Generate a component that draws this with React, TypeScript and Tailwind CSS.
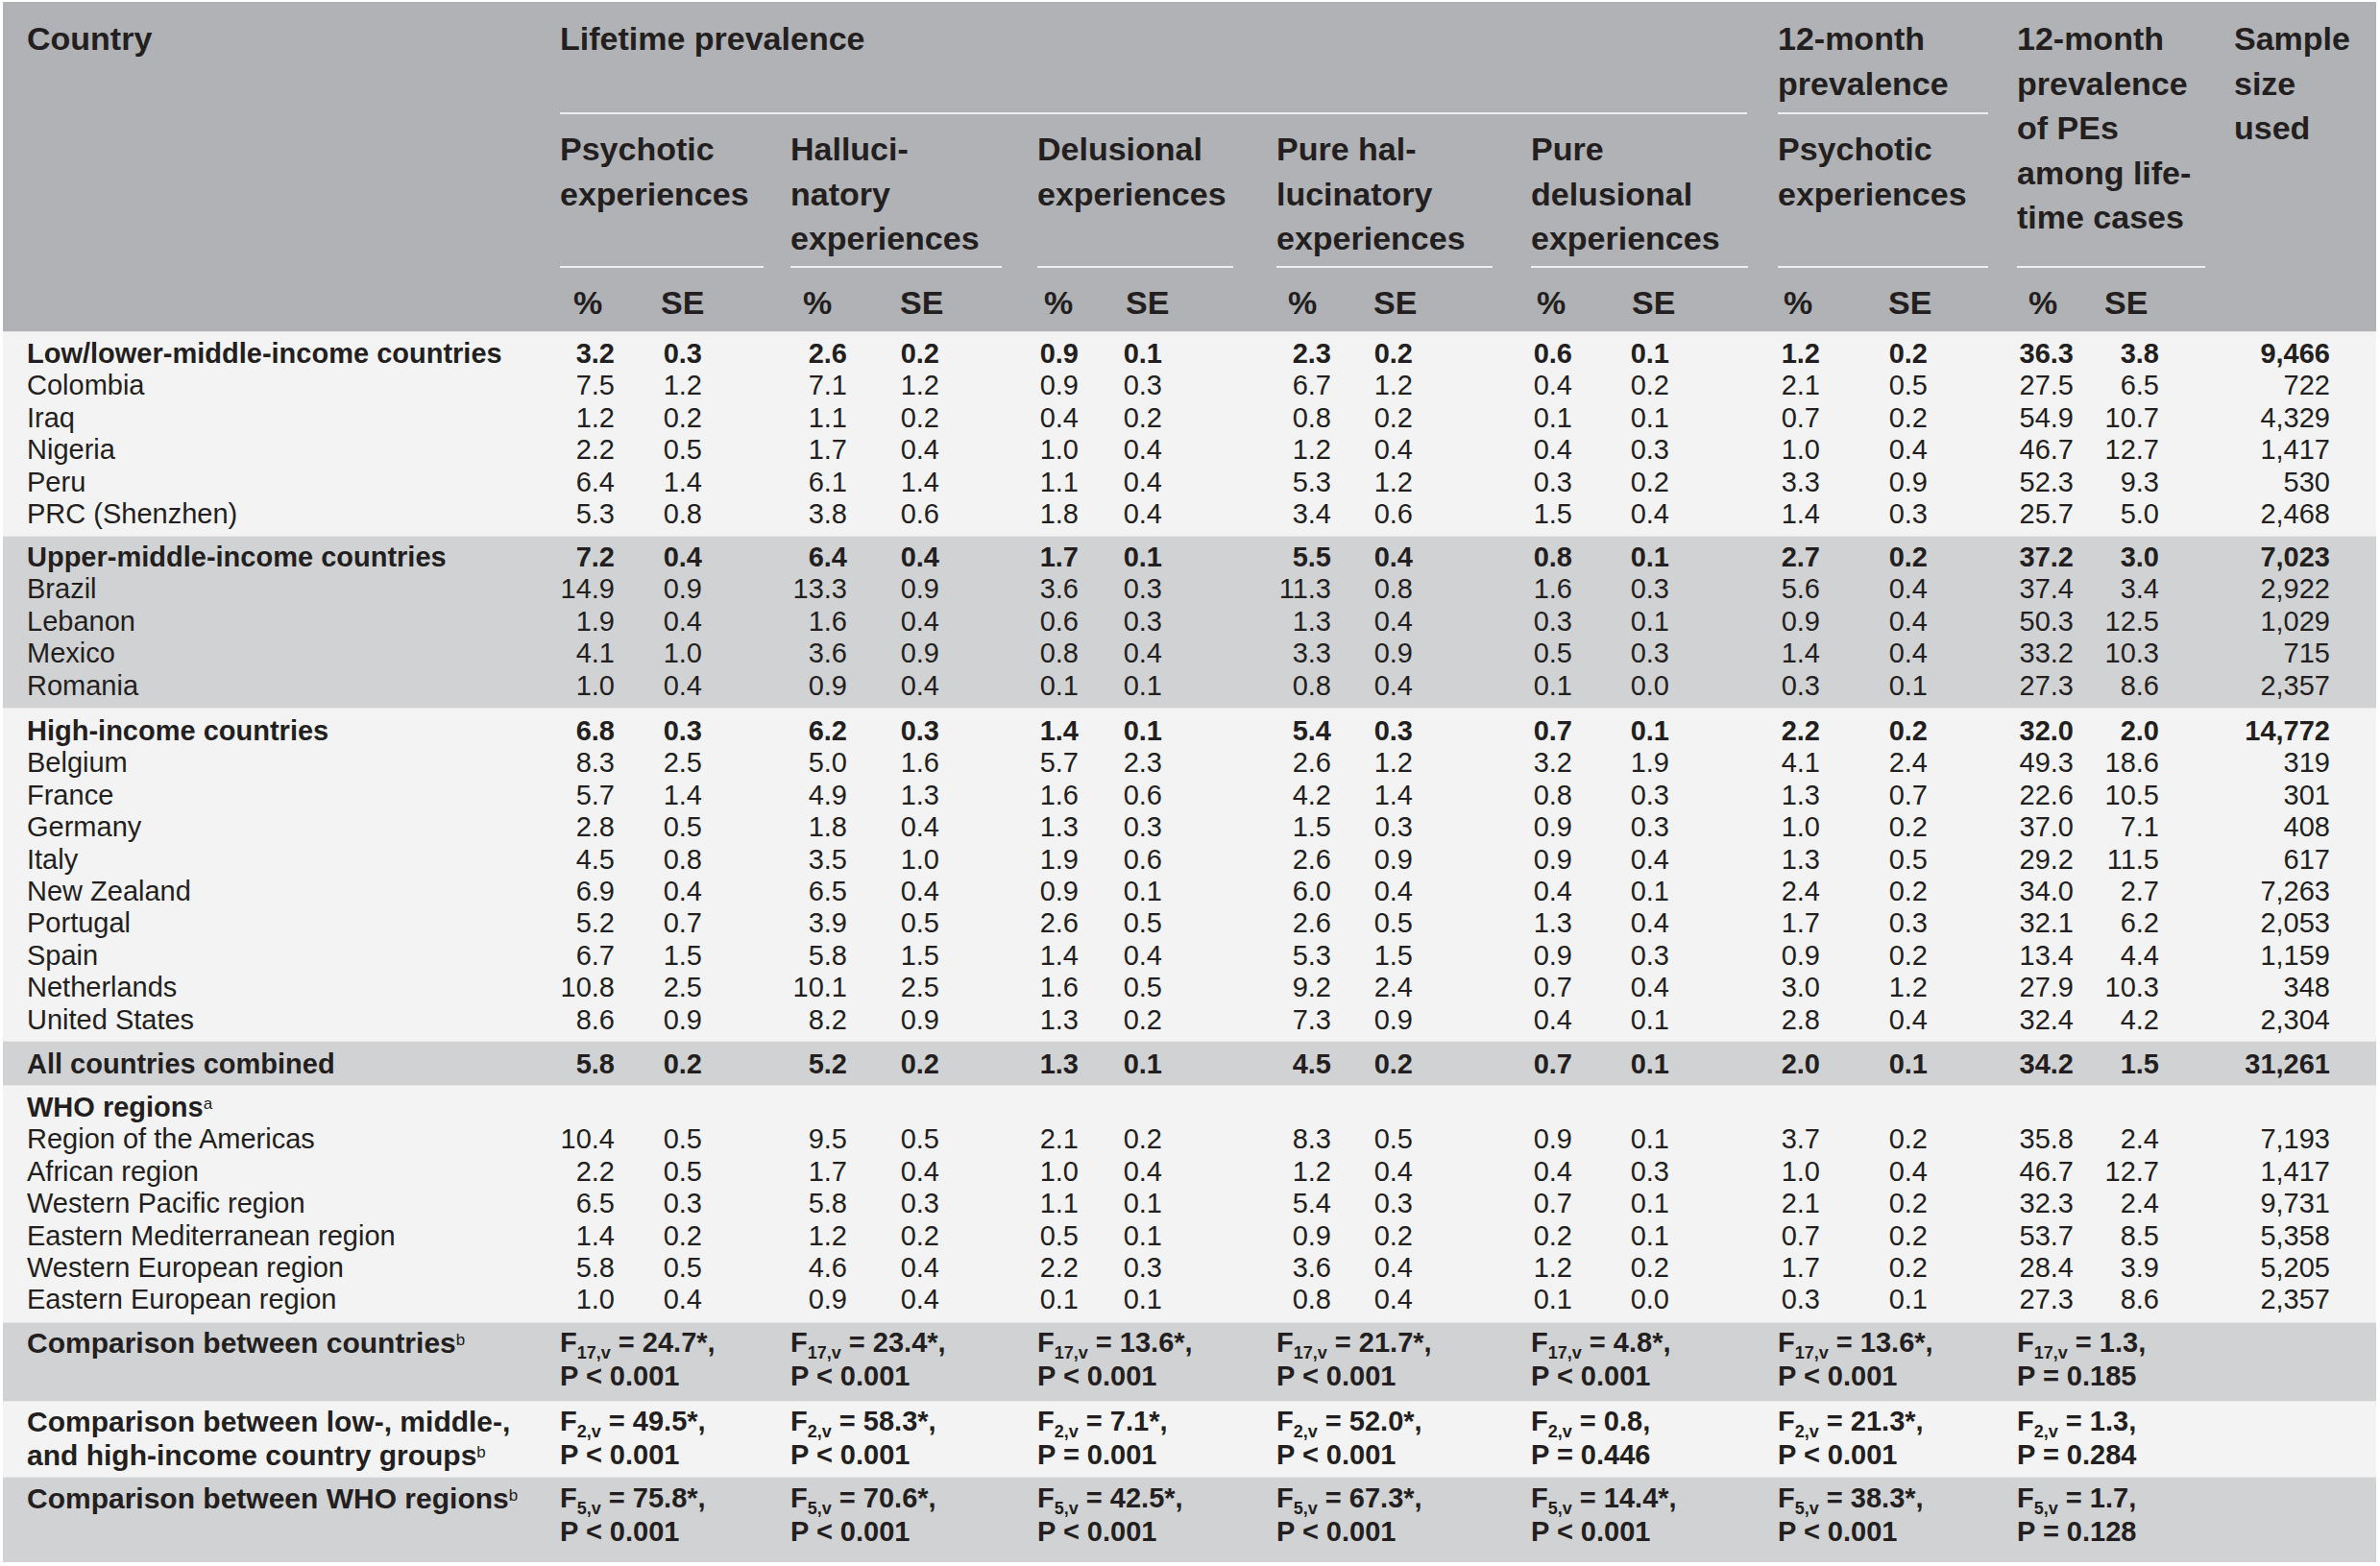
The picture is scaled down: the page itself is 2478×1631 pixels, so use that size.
type Pair = [string, string];

type Row = {
    label: string;
    vals?: Pair[];
    n?: string;
    bold?: boolean;
    sup?: string;
};

type Band = {
    bg: string;
    box: string;
    rows: Row[];
};

// widths of the %, SE and gap cells of each column group (x 583 → 2326)
const groups = [
    { wrap: 'w-[240px]', pct: 'w-[57px]', se: 'w-[91px]', gap: 'w-[92px]', line: 'w-[212px]', hpl: 'pl-[14px] w-[105px]' },
    { wrap: 'w-[257px]', pct: 'w-[59px]', se: 'w-[96px]', gap: 'w-[102px]', line: 'w-[220px]', hpl: 'pl-[13px] w-[114px]' },
    { wrap: 'w-[249px]', pct: 'w-[43px]', se: 'w-[87px]', gap: 'w-[119px]', line: 'w-[204px]', hpl: 'pl-[7px] w-[92px]' },
    { wrap: 'w-[265px]', pct: 'w-[57px]', se: 'w-[85px]', gap: 'w-[123px]', line: 'w-[225px]', hpl: 'pl-[12px] w-[101px]' },
    { wrap: 'w-[257px]', pct: 'w-[43px]', se: 'w-[101px]', gap: 'w-[113px]', line: 'w-[226px]', hpl: 'pl-[6px] w-[105px]' },
    { wrap: 'w-[249px]', pct: 'w-[44px]', se: 'w-[112px]', gap: 'w-[93px]', line: 'w-[219px]', hpl: 'pl-[6px] w-[115px]' },
    { wrap: 'w-[226px]', pct: 'w-[59px]', se: 'w-[89px]', gap: 'w-[78px]', line: 'w-[196px]', hpl: 'pl-[12px] w-[91px]' },
];

const lifetimeHeads = [
    ['Psychotic', 'experiences'],
    ['Halluci-', 'natory', 'experiences'],
    ['Delusional', 'experiences'],
    ['Pure hal-', 'lucinatory', 'experiences'],
    ['Pure', 'delusional', 'experiences'],
];

const p = (s: string): Pair[] => {
    const t = s.split(' ');
    const out: Pair[] = [];
    for (let i = 0; i < t.length; i += 2) out.push([t[i], t[i + 1]]);
    return out;
};

const LIGHT = 'bg-[#f3f3f3]';
const GRAY = 'bg-[#d1d2d4]';

const bands: Band[] = [
    {
        bg: LIGHT,
        box: 'h-[213px] pt-[6px]',
        rows: [
            { label: 'Low/lower-middle-income countries', bold: true, vals: p('3.2 0.3 2.6 0.2 0.9 0.1 2.3 0.2 0.6 0.1 1.2 0.2 36.3 3.8'), n: '9,466' },
            { label: 'Colombia', vals: p('7.5 1.2 7.1 1.2 0.9 0.3 6.7 1.2 0.4 0.2 2.1 0.5 27.5 6.5'), n: '722' },
            { label: 'Iraq', vals: p('1.2 0.2 1.1 0.2 0.4 0.2 0.8 0.2 0.1 0.1 0.7 0.2 54.9 10.7'), n: '4,329' },
            { label: 'Nigeria', vals: p('2.2 0.5 1.7 0.4 1.0 0.4 1.2 0.4 0.4 0.3 1.0 0.4 46.7 12.7'), n: '1,417' },
            { label: 'Peru', vals: p('6.4 1.4 6.1 1.4 1.1 0.4 5.3 1.2 0.3 0.2 3.3 0.9 52.3 9.3'), n: '530' },
            { label: 'PRC (Shenzhen)', vals: p('5.3 0.8 3.8 0.6 1.8 0.4 3.4 0.6 1.5 0.4 1.4 0.3 25.7 5.0'), n: '2,468' },
        ],
    },
    {
        bg: GRAY,
        box: 'h-[179px] pt-[5px]',
        rows: [
            { label: 'Upper-middle-income countries', bold: true, vals: p('7.2 0.4 6.4 0.4 1.7 0.1 5.5 0.4 0.8 0.1 2.7 0.2 37.2 3.0'), n: '7,023' },
            { label: 'Brazil', vals: p('14.9 0.9 13.3 0.9 3.6 0.3 11.3 0.8 1.6 0.3 5.6 0.4 37.4 3.4'), n: '2,922' },
            { label: 'Lebanon', vals: p('1.9 0.4 1.6 0.4 0.6 0.3 1.3 0.4 0.3 0.1 0.9 0.4 50.3 12.5'), n: '1,029' },
            { label: 'Mexico', vals: p('4.1 1.0 3.6 0.9 0.8 0.4 3.3 0.9 0.5 0.3 1.4 0.4 33.2 10.3'), n: '715' },
            { label: 'Romania', vals: p('1.0 0.4 0.9 0.4 0.1 0.1 0.8 0.4 0.1 0.0 0.3 0.1 27.3 8.6'), n: '2,357' },
        ],
    },
    {
        bg: LIGHT,
        box: 'h-[347px] pt-[7px]',
        rows: [
            { label: 'High-income countries', bold: true, vals: p('6.8 0.3 6.2 0.3 1.4 0.1 5.4 0.3 0.7 0.1 2.2 0.2 32.0 2.0'), n: '14,772' },
            { label: 'Belgium', vals: p('8.3 2.5 5.0 1.6 5.7 2.3 2.6 1.2 3.2 1.9 4.1 2.4 49.3 18.6'), n: '319' },
            { label: 'France', vals: p('5.7 1.4 4.9 1.3 1.6 0.6 4.2 1.4 0.8 0.3 1.3 0.7 22.6 10.5'), n: '301' },
            { label: 'Germany', vals: p('2.8 0.5 1.8 0.4 1.3 0.3 1.5 0.3 0.9 0.3 1.0 0.2 37.0 7.1'), n: '408' },
            { label: 'Italy', vals: p('4.5 0.8 3.5 1.0 1.9 0.6 2.6 0.9 0.9 0.4 1.3 0.5 29.2 11.5'), n: '617' },
            { label: 'New Zealand', vals: p('6.9 0.4 6.5 0.4 0.9 0.1 6.0 0.4 0.4 0.1 2.4 0.2 34.0 2.7'), n: '7,263' },
            { label: 'Portugal', vals: p('5.2 0.7 3.9 0.5 2.6 0.5 2.6 0.5 1.3 0.4 1.7 0.3 32.1 6.2'), n: '2,053' },
            { label: 'Spain', vals: p('6.7 1.5 5.8 1.5 1.4 0.4 5.3 1.5 0.9 0.3 0.9 0.2 13.4 4.4'), n: '1,159' },
            { label: 'Netherlands', vals: p('10.8 2.5 10.1 2.5 1.6 0.5 9.2 2.4 0.7 0.4 3.0 1.2 27.9 10.3'), n: '348' },
            { label: 'United States', vals: p('8.6 0.9 8.2 0.9 1.3 0.2 7.3 0.9 0.4 0.1 2.8 0.4 32.4 4.2'), n: '2,304' },
        ],
    },
    {
        bg: GRAY,
        box: 'h-[46px] pt-[7px]',
        rows: [
            { label: 'All countries combined', bold: true, vals: p('5.8 0.2 5.2 0.2 1.3 0.1 4.5 0.2 0.7 0.1 2.0 0.1 34.2 1.5'), n: '31,261' },
        ],
    },
    {
        bg: LIGHT,
        box: 'h-[247px] pt-[6px]',
        rows: [
            { label: 'WHO regions', bold: true, sup: 'a' },
            { label: 'Region of the Americas', vals: p('10.4 0.5 9.5 0.5 2.1 0.2 8.3 0.5 0.9 0.1 3.7 0.2 35.8 2.4'), n: '7,193' },
            { label: 'African region', vals: p('2.2 0.5 1.7 0.4 1.0 0.4 1.2 0.4 0.4 0.3 1.0 0.4 46.7 12.7'), n: '1,417' },
            { label: 'Western Pacific region', vals: p('6.5 0.3 5.8 0.3 1.1 0.1 5.4 0.3 0.7 0.1 2.1 0.2 32.3 2.4'), n: '9,731' },
            { label: 'Eastern Mediterranean region', vals: p('1.4 0.2 1.2 0.2 0.5 0.1 0.9 0.2 0.2 0.1 0.7 0.2 53.7 8.5'), n: '5,358' },
            { label: 'Western European region', vals: p('5.8 0.5 4.6 0.4 2.2 0.3 3.6 0.4 1.2 0.2 1.7 0.2 28.4 3.9'), n: '5,205' },
            { label: 'Eastern European region', vals: p('1.0 0.4 0.9 0.4 0.1 0.1 0.8 0.4 0.1 0.0 0.3 0.1 27.3 8.6'), n: '2,357' },
        ],
    },
];

type Comparison = {
    label: React.ReactNode;
    df: string;
    stats: [string, string][];
    bg: string;
    box: string;
};

const comparisons: Comparison[] = [
    {
        label: <>Comparison between countries<sup className="text-[17px] font-normal">b</sup></>,
        df: '17,v',
        bg: GRAY,
        box: 'h-[82px] pt-[3px]',
        stats: [
            ['24.7*,', 'P < 0.001'],
            ['23.4*,', 'P < 0.001'],
            ['13.6*,', 'P < 0.001'],
            ['21.7*,', 'P < 0.001'],
            ['4.8*,', 'P < 0.001'],
            ['13.6*,', 'P < 0.001'],
            ['1.3,', 'P = 0.185'],
        ],
    },
    {
        label: (
            <>
                Comparison between low-, middle-,
                <br />
                and high-income country groups<sup className="text-[17px] font-normal">b</sup>
            </>
        ),
        df: '2,v',
        bg: LIGHT,
        box: 'h-[79px] pt-[3px]',
        stats: [
            ['49.5*,', 'P < 0.001'],
            ['58.3*,', 'P < 0.001'],
            ['7.1*,', 'P = 0.001'],
            ['52.0*,', 'P < 0.001'],
            ['0.8,', 'P = 0.446'],
            ['21.3*,', 'P < 0.001'],
            ['1.3,', 'P = 0.284'],
        ],
    },
    {
        label: <>Comparison between WHO regions<sup className="text-[17px] font-normal">b</sup></>,
        df: '5,v',
        bg: GRAY,
        box: 'h-[89px] pt-[4px]',
        stats: [
            ['75.8*,', 'P < 0.001'],
            ['70.6*,', 'P < 0.001'],
            ['42.5*,', 'P < 0.001'],
            ['67.3*,', 'P < 0.001'],
            ['14.4*,', 'P < 0.001'],
            ['38.3*,', 'P < 0.001'],
            ['1.7,', 'P = 0.128'],
        ],
    },
];

function Lines({ lines }: { lines: string[] }) {
    return (
        <>
            {lines.map((l, i) => (
                <div key={i} className="whitespace-nowrap">
                    {l}
                </div>
            ))}
        </>
    );
}

function PctSe({ cls }: { cls: string }) {
    return (
        <div className="flex h-[66px] pt-[13px]">
            <span className={cls}>%</span>
            <span>SE</span>
        </div>
    );
}

function Header() {
    return (
        <div className="flex h-[343px] bg-[#b1b2b5] text-[34px] leading-[46.5px] font-bold">
            <div className="w-[580px] pl-[25px] pt-[15px]">Country</div>

            {/* Lifetime prevalence */}
            <div className="w-[1268px] flex flex-col">
                <div className="h-[115px] pt-[15px]">Lifetime prevalence</div>
                <div className="h-[2px] w-[1236px] bg-[#eeeeee]" />
                <div className="flex">
                    {lifetimeHeads.map((lines, i) => (
                        <div key={i} className={groups[i].wrap + ' flex flex-col'}>
                            <div className="h-[158px] pt-[13px]">
                                <Lines lines={lines} />
                            </div>
                            <div className={groups[i].line + ' h-[2px] bg-[#eeeeee]'} />
                            <PctSe cls={groups[i].hpl} />
                        </div>
                    ))}
                </div>
            </div>

            {/* 12-month prevalence */}
            <div className="w-[249px] flex flex-col">
                <div className="h-[115px] pt-[15px]">
                    <Lines lines={['12-month', 'prevalence']} />
                </div>
                <div className="h-[2px] w-[219px] bg-[#eeeeee]" />
                <div className="h-[158px] pt-[13px]">
                    <Lines lines={['Psychotic', 'experiences']} />
                </div>
                <div className="h-[2px] w-[219px] bg-[#eeeeee]" />
                <PctSe cls={groups[5].hpl} />
            </div>

            {/* PEs among lifetime cases */}
            <div className="w-[226px] flex flex-col">
                <div className="h-[275px] pt-[15px]">
                    <Lines lines={['12-month', 'prevalence', 'of PEs', 'among life-', 'time cases']} />
                </div>
                <div className="h-[2px] w-[196px] bg-[#eeeeee]" />
                <PctSe cls={groups[6].hpl} />
            </div>

            <div className="flex-1 pt-[15px]">
                <Lines lines={['Sample', 'size', 'used']} />
            </div>
        </div>
    );
}

function DataRow({ row }: { row: Row }) {
    return (
        <div className={'flex ' + (row.bold ? 'font-bold' : 'font-normal')}>
            <div className="w-[580px] pl-[25px] whitespace-nowrap">
                {row.label}
                {row.sup && <sup className="text-[17px] font-normal">{row.sup}</sup>}
            </div>
            {row.vals &&
                groups.map((g, i) => (
                    <div key={i} className="flex">
                        <div className={g.pct + ' text-right'}>{row.vals![i][0]}</div>
                        <div className={g.se + ' text-right'}>{row.vals![i][1]}</div>
                        <div className={g.gap} />
                    </div>
                ))}
            {row.n && <div className="w-[100px] text-right">{row.n}</div>}
        </div>
    );
}

function ComparisonRow({ c }: { c: Comparison }) {
    return (
        <div className={c.bg + ' ' + c.box + ' flex font-bold leading-[35px] border-t border-[#e7e7e8]'}>
            <div className="w-[580px] pl-[25px] whitespace-nowrap text-[30px]">{c.label}</div>
            {c.stats.map(([f, pv], i) => (
                <div key={i} className={groups[i].wrap + ' whitespace-nowrap'}>
                    <div>
                        F<sub className="text-[18px] -bottom-[7px]">{c.df}</sub> = {f}
                    </div>
                    <div>{pv}</div>
                </div>
            ))}
        </div>
    );
}

export default function App() {
    return (
        <div className="w-[2478px] h-[1631px] bg-white pt-[2px] pl-[3px] font-['Liberation_Sans',Arial,sans-serif] text-[#231f20]">
            <div className="w-[2471px]">
                <Header />
                {bands.map((b, i) => (
                    <div
                        key={i}
                        className={b.bg + ' ' + b.box + ' text-[29px] leading-[33.4px] border-t border-[#e7e7e8]'}
                    >
                        {b.rows.map((r, j) => (
                            <DataRow key={j} row={r} />
                        ))}
                    </div>
                ))}
                <div className="text-[29px]">
                    {comparisons.map((c, i) => (
                        <ComparisonRow key={i} c={c} />
                    ))}
                </div>
            </div>
        </div>
    );
}
